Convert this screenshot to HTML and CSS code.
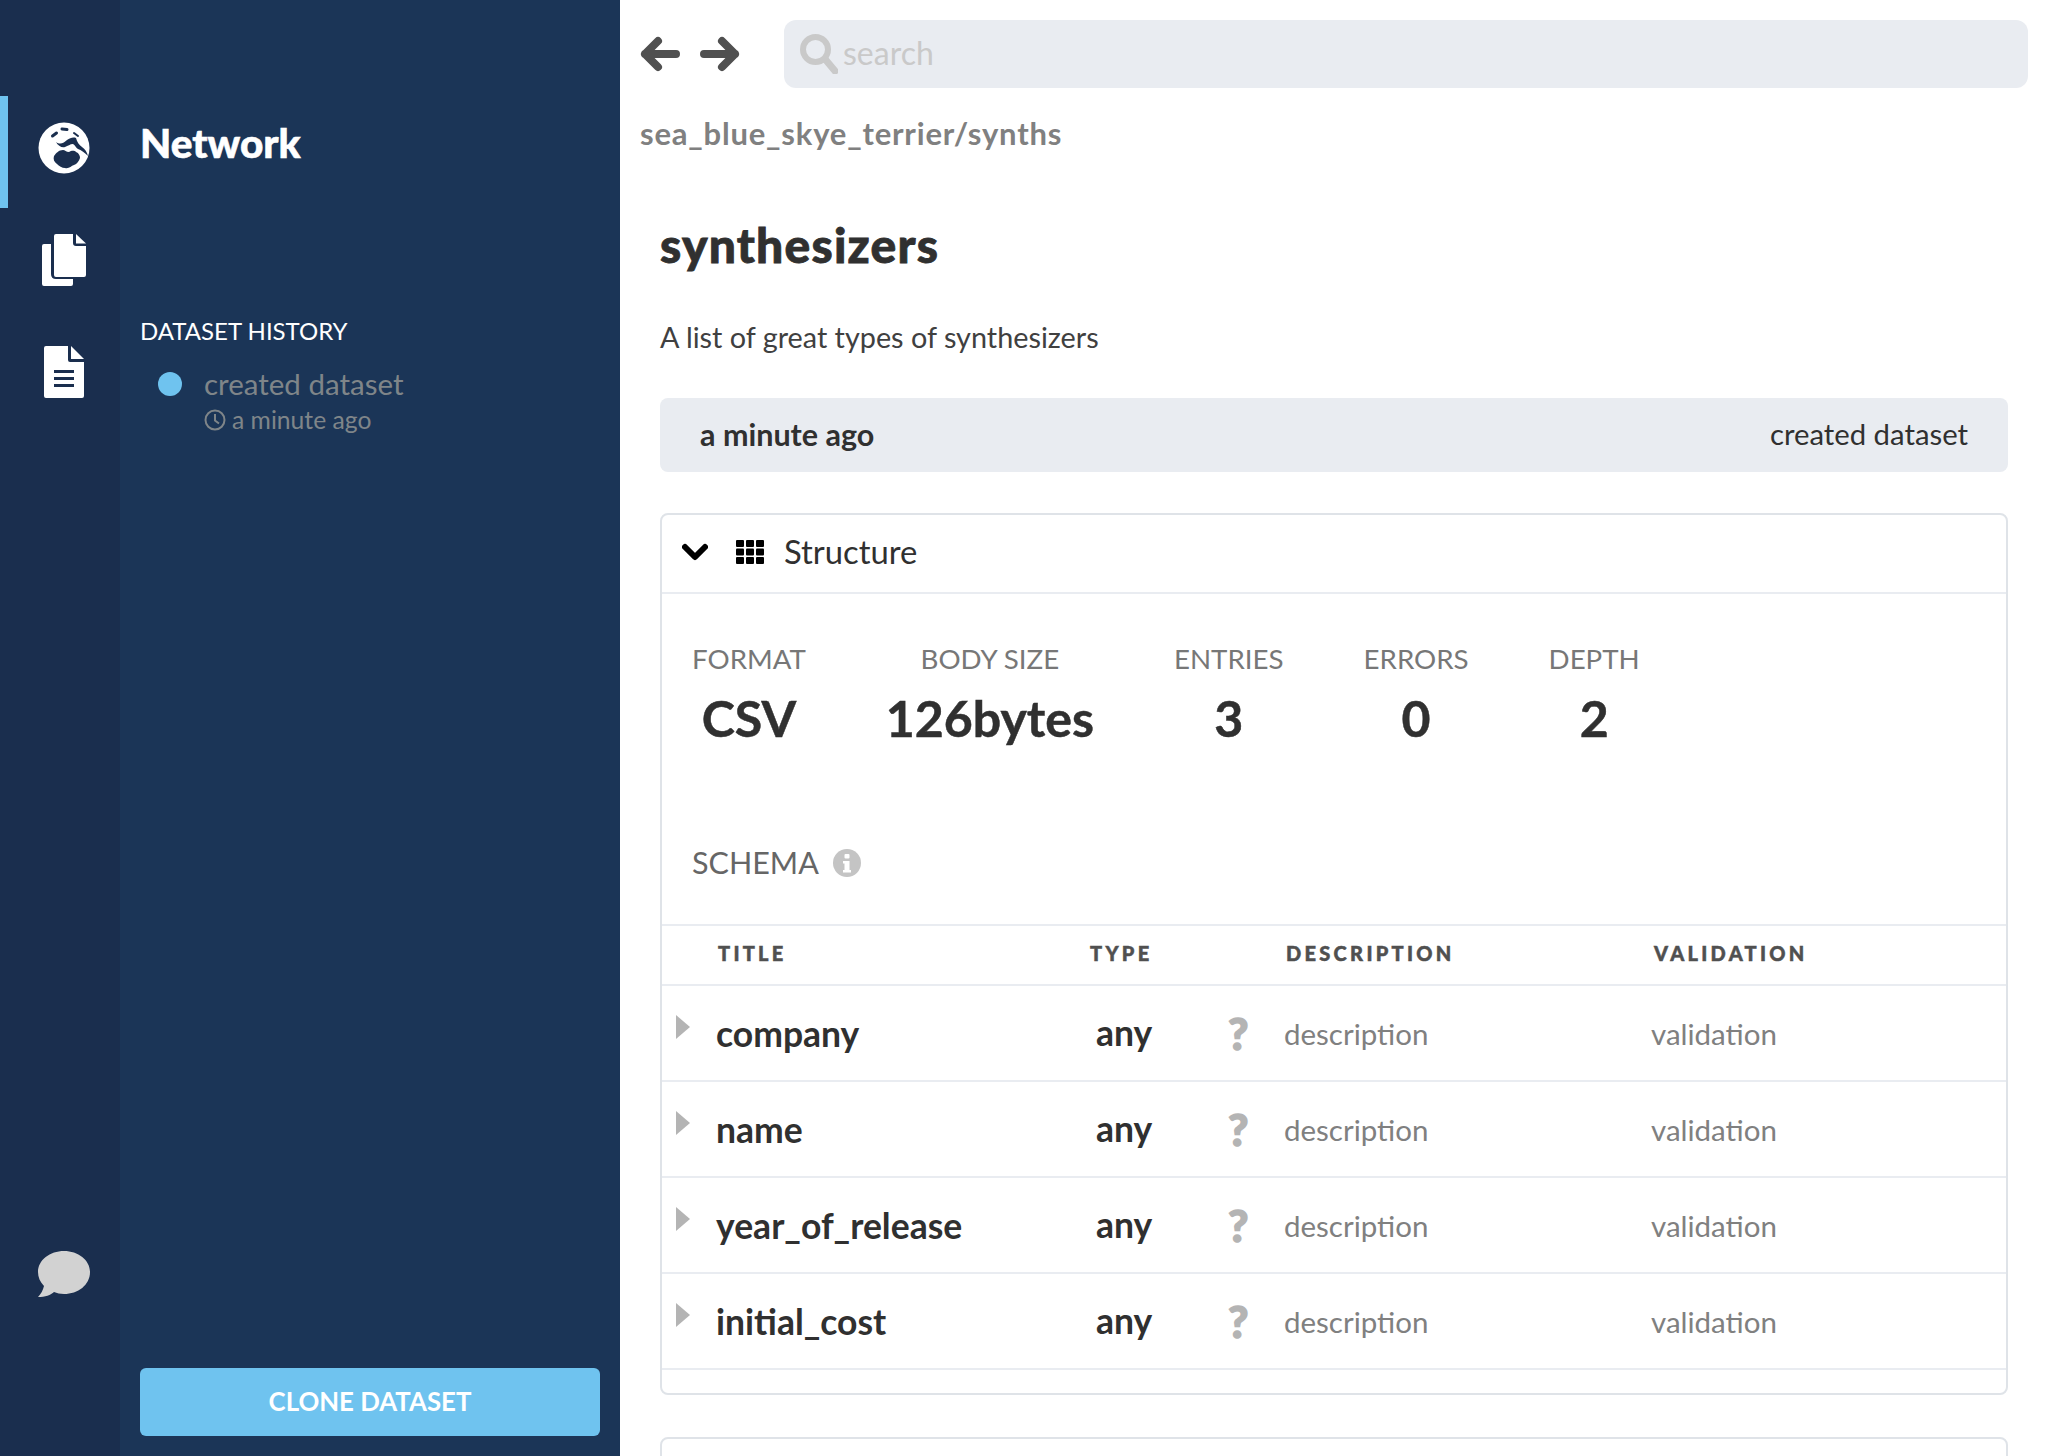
FILE: index.html
```html
<!DOCTYPE html>
<html lang="en">
<head>
<meta charset="UTF-8">
<meta name="viewport" content="width=device-width, initial-scale=1.0">
<title>synthesizers</title>
<link rel="stylesheet" href="styles.css">
</head>
<body>

<div class="rail">
  <div class="railItem active">
    <svg class="globeIcon" viewBox="0 0 52 52">
      <circle cx="26" cy="26" r="25.500" fill="#fff"/>
      <path fill="#1a2e4e" d="M16 34c2-3 5-6 9-6c2 0 3 2 6 2c2-1 5-2 7 0c3 1 4 4 4 6c-1 3-3 6-6 7c-3 1-5 4-9 3c-3 0-6-2-8-4c-3-2-4-5-3-8z"/>
      <path fill="#1a2e4e" d="M18 20c4 3 8 1 11-2c3-2 6-3 9-2c1 4 3 7 6 9c3 2 5 5 6 9c-3-3-7-6-10-7c-2-1-3-4-5-5c-3 0-5 2-8 3c-3 1-7-1-9-5z"/>
      <g fill="none" stroke="#1a2e4e" stroke-linecap="round" stroke-linejoin="round">
        <path stroke-width="3" d="M14.500 14l4-3M24 7l5 .5"/>
        <path stroke-width="2" d="M36 11l4 3"/>
      </g>
    </svg>
  </div>
  <div class="railItem">
    <svg class="copyIcon" viewBox="0 0 44 52"><path fill="#fff" d="M0 12q0-2 2-2h7v30q0 5 5 5h17v5q0 2-2 2H2q-2 0-2-2z"/><path fill="#fff" d="M14 0h17v9q0 3 3 3h10v29q0 2-2 2H14q-2 0-2-2V2q0-2 2-2z"/><path fill="#fff" d="M34 0l10 9.500H34z"/></svg>
  </div>
  <div class="railItem">
    <svg class="fileIcon" viewBox="0 0 40 52"><path fill="#fff" fill-rule="evenodd" d="M2 0h22v14q0 2 2 2h14v34q0 2-2 2H2q-2 0-2-2V2q0-2 2-2zM10 24v3h20v-3zM10 31v3h20v-3zM10 38v3h20v-3z"/><path fill="#fff" d="M27 0l13 13H27z"/></svg>
  </div>
  <svg class="chatIcon" viewBox="0 0 52 46"><path fill="#d2d2d2" d="M26 0c14 0 26 9 26 21c0 13-12 22-26 22c-4 0-7-1-10-2c-3 3-9 5-16 5c3-3 5-7 6-11c-4-4-6-9-6-14c0-12 12-21 26-21z"/></svg>
</div>

<div class="panel">
  <h1 class="panelTitle">Network</h1>
  <div class="historyLabel">DATASET HISTORY</div>
  <div class="historyItem">
    <span class="historyDot"></span>
    <div>
      <div class="historyText">created dataset</div>
      <div class="historyTime">
        <svg class="clockIcon" viewBox="0 0 22 22"><circle cx="11" cy="11" r="9.500" fill="none" stroke="#7f8589" stroke-width="2"/><path d="M11 5v6.500l4 3" fill="none" stroke="#7f8589" stroke-width="2"/></svg>
        a minute ago
      </div>
    </div>
  </div>
  <button class="cloneBtn">CLONE DATASET</button>
</div>

<div class="main">
  <div class="topBar">
    <svg class="navIcon" viewBox="0 0 40 36"><path fill="none" stroke="#505050" stroke-width="8" stroke-linecap="round" stroke-linejoin="round" d="M36 18H5M18 5L5 18l13 13"/></svg>
    <svg class="navIcon" viewBox="0 0 40 36"><path fill="none" stroke="#505050" stroke-width="8" stroke-linecap="round" stroke-linejoin="round" d="M4 18h31M22 5l13 13l-13 13"/></svg>
    <div class="searchBox">
      <svg class="searchIcon" viewBox="0 0 38 40"><circle cx="15.500" cy="15.500" r="12.500" fill="none" stroke="#c9c9c9" stroke-width="6"/><path d="M25 25l10 12" stroke="#c9c9c9" stroke-width="7" stroke-linecap="round"/></svg>
      <span class="searchText">search</span>
    </div>
  </div>
  <div class="breadcrumb">sea_blue_skye_terrier/synths</div>

  <div class="content">
    <h2 class="title">synthesizers</h2>
    <p class="description">A list of great types of synthesizers</p>

    <div class="commitBar">
      <span class="commitTime">a minute ago</span>
      <span class="commitMsg">created dataset</span>
    </div>

    <div class="card">
      <div class="cardHeader">
        <svg class="chevron" viewBox="0 0 26 18"><path fill="none" stroke="#000" stroke-width="6" stroke-linecap="round" stroke-linejoin="round" d="M3 4l10 10L23 4"/></svg>
        <svg class="gridIcon" viewBox="0 0 28 24"><g fill="#000"><rect width="8" height="7" rx="1"/><rect x="10" width="8" height="7" rx="1"/><rect x="20" width="8" height="7" rx="1"/><rect y="8.500" width="8" height="7" rx="1"/><rect x="10" y="8.500" width="8" height="7" rx="1"/><rect x="20" y="8.500" width="8" height="7" rx="1"/><rect y="17" width="8" height="7" rx="1"/><rect x="10" y="17" width="8" height="7" rx="1"/><rect x="20" y="17" width="8" height="7" rx="1"/></g></svg>
        <span class="cardTitle">Structure</span>
      </div>

      <div class="stats">
        <div class="stat"><div class="statLabel">FORMAT</div><div class="statValue">CSV</div></div>
        <div class="stat"><div class="statLabel">BODY SIZE</div><div class="statValue">126bytes</div></div>
        <div class="stat"><div class="statLabel">ENTRIES</div><div class="statValue">3</div></div>
        <div class="stat"><div class="statLabel">ERRORS</div><div class="statValue">0</div></div>
        <div class="stat"><div class="statLabel">DEPTH</div><div class="statValue">2</div></div>
      </div>

      <div class="schemaLabel">
        SCHEMA
        <svg class="infoIcon" viewBox="0 0 28 28"><circle cx="14" cy="14" r="14" fill="#c4c4c4"/><rect x="11.500" y="5" width="5" height="4.500" rx="1" fill="#fff"/><path fill="#fff" d="M10 12h6.500v9H18v2.500h-8V21h1.500v-6.500H10z"/></svg>
      </div>

      <div class="schemaHead">
        <span>TITLE</span><span>TYPE</span><span>DESCRIPTION</span><span>VALIDATION</span>
      </div>

      <div class="schemaRow">
        <svg class="rowArrow" viewBox="0 0 14 24"><path fill="#b4b4b4" d="M0 0l14 12L0 24z"/></svg>
        <span class="fieldName">company</span>
        <span class="fieldType">any</span>
        <span class="fieldUnknown">?</span>
        <span class="fieldMeta">description</span>
        <span class="fieldMeta">validation</span>
      </div>
      <div class="schemaRow">
        <svg class="rowArrow" viewBox="0 0 14 24"><path fill="#b4b4b4" d="M0 0l14 12L0 24z"/></svg>
        <span class="fieldName">name</span>
        <span class="fieldType">any</span>
        <span class="fieldUnknown">?</span>
        <span class="fieldMeta">description</span>
        <span class="fieldMeta">validation</span>
      </div>
      <div class="schemaRow">
        <svg class="rowArrow" viewBox="0 0 14 24"><path fill="#b4b4b4" d="M0 0l14 12L0 24z"/></svg>
        <span class="fieldName">year_of_release</span>
        <span class="fieldType">any</span>
        <span class="fieldUnknown">?</span>
        <span class="fieldMeta">description</span>
        <span class="fieldMeta">validation</span>
      </div>
      <div class="schemaRow">
        <svg class="rowArrow" viewBox="0 0 14 24"><path fill="#b4b4b4" d="M0 0l14 12L0 24z"/></svg>
        <span class="fieldName">initial_cost</span>
        <span class="fieldType">any</span>
        <span class="fieldUnknown">?</span>
        <span class="fieldMeta">description</span>
        <span class="fieldMeta">validation</span>
      </div>
    </div>

    <div class="card nextCard"></div>
  </div>
</div>

</body>
</html>
```

FILE: styles.css
```css
* {
  box-sizing: border-box;
}

body {
  font-family: Lato, "Open Sans", sans-serif;
  background-color: #fff;
  color: #303030;
  margin: 0;
  padding: 0;
  display: flex;
  height: 100vh;
  overflow: hidden;
}

/* icon rail */
.rail {
  width: 120px;
  flex-shrink: 0;
  background-color: #1a2e4e;
  padding-top: 96px;
  display: flex;
  flex-direction: column;
}

.railItem {
  height: 112px;
  display: flex;
  align-items: center;
  justify-content: center;
  border-left: 8px solid transparent;
  padding-bottom: 8px;
}

.railItem.active {
  border-left-color: #6fc3ef;
}

.globeIcon { width: 52px; height: 52px; }
.copyIcon { width: 44px; height: 52px; }
.fileIcon { width: 40px; height: 52px; }

.chatIcon {
  width: 52px;
  height: 46px;
  margin: auto 0 159px 38px;
}

/* history panel */
.panel {
  width: 500px;
  flex-shrink: 0;
  background-color: #1b3557;
  padding: 0 20px 20px 20px;
  display: flex;
  flex-direction: column;
  color: #fff;
}

.panelTitle {
  font-size: 40.500px;
  font-weight: 900;
  -webkit-text-stroke: 0.6px #fff;
  margin: 120px 0 0 0;
  line-height: 46px;
}

.historyLabel {
  font-size: 24px;
  margin-top: 150px;
  line-height: 30px;
}

.historyItem {
  display: flex;
  margin-top: 20px;
  padding-left: 18px;
  gap: 22px;
}

.historyDot {
  width: 24px;
  height: 24px;
  border-radius: 50%;
  background-color: #6fc3ef;
  margin-top: 6px;
}

.historyText {
  font-size: 29.500px;
  line-height: 36px;
  color: #7f8589;
}

.historyTime {
  font-size: 24.700px;
  line-height: 36px;
  color: #7f8589;
  display: flex;
  align-items: center;
  gap: 6px;
}

.clockIcon {
  width: 22px;
  height: 22px;
}

.cloneBtn {
  margin-top: auto;
  height: 68px;
  background-color: #6fc3ef;
  color: #fff;
  border: none;
  border-radius: 6px;
  font-family: inherit;
  font-size: 25.800px;
  font-weight: 700;
  padding-bottom: 4px;
}

/* main column */
.main {
  flex: 1;
  min-width: 0;
  padding: 20px 20px 0 20px;
}

.topBar {
  display: flex;
  align-items: center;
  height: 68px;
}

.navIcon {
  width: 40px;
  height: 36px;
  margin-right: 20px;
}

.searchBox {
  flex: 1;
  height: 68px;
  margin-left: 24px;
  background-color: #e9ecf1;
  border-radius: 12px;
  display: flex;
  align-items: center;
  padding-left: 16px;
}

.searchIcon {
  width: 38px;
  height: 40px;
  margin-right: 5px;
}

.searchText {
  font-size: 32px;
  color: #c9c9c9;
  margin-bottom: 3px;
}

.breadcrumb {
  font-size: 31px;
  font-weight: 700;
  letter-spacing: 0.8px;
  color: #808080;
  margin-top: 27px;
  line-height: 36px;
}

.content {
  padding: 0 20px;
}

.title {
  font-size: 48px;
  font-weight: 900;
  letter-spacing: 1.200px;
  -webkit-text-stroke: 0.8px #303030;
  line-height: 56px;
  margin: 66px 0 0 0;
}

.description {
  font-size: 28.800px;
  line-height: 36px;
  margin: 46px 0 0 0;
  color: #404040;
}

.commitBar {
  height: 74px;
  margin-top: 43px;
  background-color: #e9ecf1;
  border-radius: 8px;
  display: flex;
  justify-content: space-between;
  align-items: center;
  padding: 0 40px 3px 40px;
  font-size: 28px;
}

.commitTime {
  font-size: 30.500px;
  font-weight: 700;
}

.commitMsg {
  font-size: 29.300px;
}

.card {
  margin-top: 41px;
  border: 2px solid #dfe3e8;
  border-radius: 8px;
  height: 882px;
}

.nextCard {
  height: 200px;
  margin-top: 42px;
}

.cardHeader {
  height: 79px;
  border-bottom: 2px solid #e9ecf1;
  display: flex;
  align-items: center;
  padding: 0 0 4px 20px;
}

.chevron {
  width: 26px;
  height: 18px;
}

.gridIcon {
  width: 28px;
  height: 24px;
  margin-left: 28px;
}

.cardTitle {
  font-size: 32.800px;
  margin-left: 20px;
}

.stats {
  display: flex;
  gap: 80px;
  padding: 47px 0 0 30px;
}

.stat {
  text-align: center;
}

.statLabel {
  font-size: 27.700px;
  line-height: 36px;
  color: #777;
}

.statValue {
  font-size: 50px;
  font-weight: 700;
  -webkit-text-stroke: 0.5px #303030;
  line-height: 60px;
  margin-top: 11px;
}

.schemaLabel {
  display: flex;
  align-items: center;
  gap: 14px;
  font-size: 30.500px;
  color: #666;
  padding-left: 30px;
  margin-top: 94px;
  height: 40px;
}

.infoIcon {
  width: 28px;
  height: 28px;
  margin-top: 2px;
}

.schemaHead {
  margin-top: 42px;
  height: 62px;
  border-top: 2px solid #e9ecf1;
  border-bottom: 2px solid #e9ecf1;
  display: grid;
  grid-template-columns: 372px 196px 368px 1fr;
  align-items: center;
  padding: 0 0 4px 56px;
  font-size: 20px;
  font-weight: 900;
  letter-spacing: 3.300px;
  -webkit-text-stroke: 0.5px #505050;
  color: #505050;
}

.schemaRow {
  height: 96px;
  border-bottom: 2px solid #e9ecf1;
  display: grid;
  grid-template-columns: 54px 380px 120px 68px 367px 1fr;
  align-items: center;
  padding-left: 14px;
}

.rowArrow {
  width: 14px;
  height: 24px;
  margin-bottom: 12px;
}

.fieldName {
  font-size: 35.500px;
  font-weight: 700;
  margin-left: -14px;
}

.fieldType {
  font-size: 35.500px;
  font-weight: 700;
  margin-left: -14px;
  padding-bottom: 2px;
}

.fieldUnknown {
  font-size: 44px;
  font-weight: 900;
  -webkit-text-stroke: 1.500px #b4b4b4;
  color: #b4b4b4;
  margin-left: -2px;
}

.fieldMeta {
  font-size: 29.500px;
  color: #808080;
  margin-left: -14px;
}
```
